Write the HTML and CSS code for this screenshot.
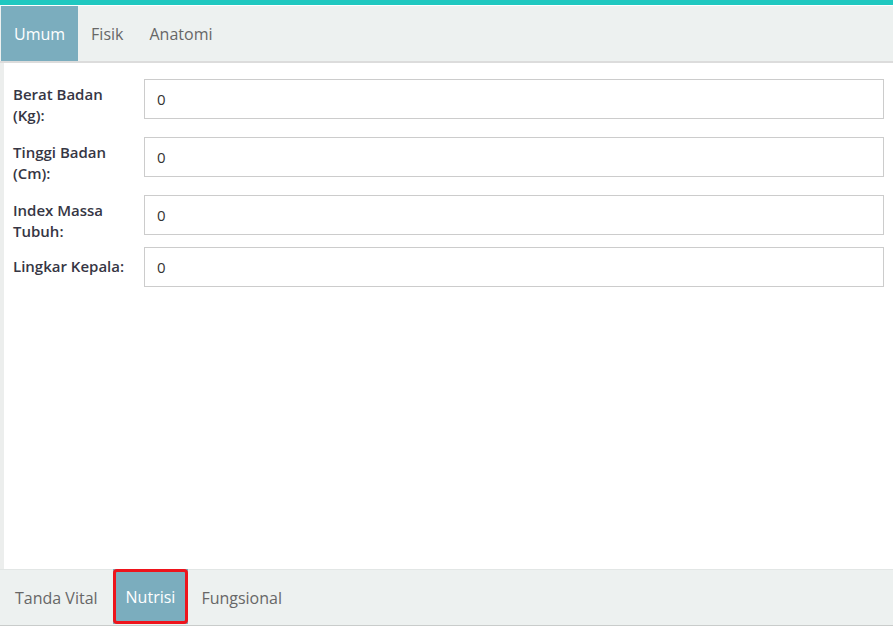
FILE: index.html
```html
<!DOCTYPE html>
<html lang="id">
<head>
<meta charset="utf-8">
<title>Pemeriksaan</title>
<link rel="stylesheet" href="styles.css">
</head>
<body>
<div class="page">
  <div class="accent"></div>
  <nav class="tabs tabs-top">
    <a class="tab active">Umum</a>
    <a class="tab">Fisik</a>
    <a class="tab">Anatomi</a>
  </nav>
  <main class="content">
    <div class="field tall">
      <label class="field-label">Berat Badan (Kg):</label>
      <input class="field-input" type="text" value="0">
    </div>
    <div class="field tall">
      <label class="field-label">Tinggi Badan (Cm):</label>
      <input class="field-input" type="text" value="0">
    </div>
    <div class="field tall">
      <label class="field-label">Index Massa Tubuh:</label>
      <input class="field-input" type="text" value="0">
    </div>
    <div class="field">
      <label class="field-label">Lingkar Kepala:</label>
      <input class="field-input" type="text" value="0">
    </div>
  </main>
  <nav class="tabs tabs-bottom">
    <a class="tab">Tanda Vital</a>
    <a class="tab active highlighted">Nutrisi</a>
    <a class="tab">Fungsional</a>
  </nav>
</div>
</body>
</html>
```

FILE: styles.css
```css
* { box-sizing: border-box; }

html, body {
  margin: 0;
  padding: 0;
  height: 100%;
  background: #ffffff;
}

body {
  font-family: "Open Sans", "Noto Sans", sans-serif;
  color: #333;
}

.page {
  height: 100vh;
  display: flex;
  flex-direction: column;
  padding-bottom: 3px;
}

.accent {
  height: 5px;
  flex: none;
  background: #1fc8c0;
  margin-bottom: 1px;
}

.tabs {
  display: flex;
  flex: none;
  background: #edf1f0;
}

.tabs-top {
  height: 57px;
  padding-left: 1px;
  border-bottom: 2px solid #dcdcdc;
}

.tabs-bottom {
  height: 57px;
  padding-left: 2px;
  border-top: 1px solid #e2e6e5;
  border-bottom: 1px solid #c9cccb;
}

.tab {
  display: flex;
  align-items: center;
  padding: 0 13px;
  font-size: 16px;
  color: #676767;
  text-decoration: none;
  position: relative;
}

.tab.active {
  background: #7badbe;
  color: #ffffff;
}

.tabs-bottom .tab.active {
  margin-left: 2px;
  height: 55px;
  margin-top: -1px;
}

.tab.highlighted::after {
  content: "";
  position: absolute;
  inset: 0;
  border: 3px solid #ee141c;
  border-radius: 4px;
}

.content {
  flex: 1;
  border-left: 4px solid #eceeed;
  padding: 9px 9px 0 9px;
  display: flex;
  flex-direction: column;
  gap: 4px;
}

.field {
  display: flex;
  align-items: center;
}

.field-label {
  flex: none;
  width: 131px;
  padding: 10px 14px 10px 0;
  font-size: 15px;
  font-weight: 600;
  line-height: 21px;
  color: #363644;
}

.field.tall .field-label {
  padding: 12px 14px 0 0;
}

.field-input {
  flex: 1;
  min-width: 0;
  height: 40px;
  border: 1px solid #cccccc;
  border-radius: 0;
  padding: 0 12px;
  font-family: "Open Sans", "Noto Sans", sans-serif;
  font-size: 15px;
  color: #333;
  background: #fff;
  outline: none;
}
```
